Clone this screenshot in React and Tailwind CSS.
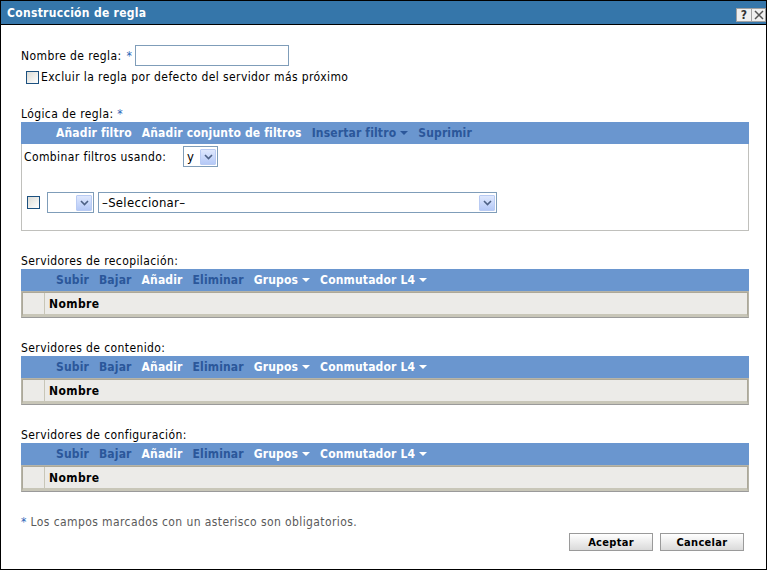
import React from 'react';

const font = { fontFamily: '"DejaVu Sans Condensed", "DejaVu Sans", sans-serif' };

// Small blue chevron button used on the fake selects
const SelectArrow = () => (
  <span className="w-[16px] h-[16px] mr-[1px] flex items-center justify-center bg-gradient-to-b from-[#dfe8fd] to-[#b5c9f7] border border-[#b9cbf3] rounded-[1px]">
    <svg width="9" height="6" viewBox="0 0 9 6">
      <path d="M1 1 L4.5 4.5 L8 1" stroke="#4d6185" strokeWidth="1.6" fill="none" />
    </svg>
  </span>
);

const Select = ({ value, className }) => (
  <div className={`h-[21px] border border-[#7f9db9] bg-white flex items-center justify-between ${className}`}>
    <span className="pl-[3px] text-[13px] text-black leading-none tracking-[0.3px]">{value}</span>
    <SelectArrow />
  </div>
);

const Checkbox = () => (
  <span className="inline-block w-[13px] h-[13px] border border-[#1c5180] bg-gradient-to-br from-[#dcdcd6] to-white" />
);

const Caret = ({ color }) => (
  <svg width="8" height="5" viewBox="0 0 8 5" className="ml-[4px] mt-[1px]">
    <path d="M0 0 H8 L4 4 Z" fill={color} />
  </svg>
);

// Toolbar item: white when active, dark blue when disabled
const Item = ({ label, active, menu }) => {
  const color = active ? '#ffffff' : '#2b579a';
  return (
    <span className="flex items-center font-bold text-[12px] tracking-[0.15px]" style={{ color }}>
      {label}
      {menu && <Caret color={color} />}
    </span>
  );
};

const Toolbar = ({ items }) => (
  <div className="h-[22px] w-[728px] bg-[#6a96cf] flex items-center pl-[35px] gap-[10px]">
    {items.map((it) => (
      <Item key={it.label} {...it} />
    ))}
  </div>
);

const ServerTable = ({ title }) => (
  <div className="mt-[22px]">
    <div className="text-[12px] text-black leading-[16px] tracking-[0.4px]">{title}</div>
    <Toolbar
      items={[
        { label: 'Subir' },
        { label: 'Bajar' },
        { label: 'Añadir', active: true },
        { label: 'Eliminar' },
        { label: 'Grupos', active: true, menu: true },
        { label: 'Conmutador L4', active: true, menu: true },
      ]}
    />
    <div className="w-[728px] border border-[#b6b4a8] border-b-[#9a9a9a]">
      <div className="h-[25px] bg-[#ecebe8] border border-[#aca899] border-b-[3px] border-b-[#c8c6b8] flex">
        <div className="w-[22px] border-r border-[#c8c6b8]" />
        <div className="pl-[4px] flex items-center font-bold text-[12px] text-black">Nombre</div>
      </div>
    </div>
  </div>
);

export default function App() {
  return (
    <div className="w-[770px] h-[571px] bg-white" style={font}>
      <div className="w-[767px] h-[570px] border border-black flex flex-col">
        {/* title bar */}
        <div className="h-[24px] bg-[#3576aa] border-b border-black flex items-center justify-between shrink-0">
          <span className="pl-[6px] text-white font-bold text-[12px] tracking-[0.3px]">Construcción de regla</span>
          <div className="flex self-start mt-[7px]">
            <span className="w-[16px] h-[14px] bg-[#efefef] border border-[#a0a0a0] flex items-center justify-center text-[12px] font-bold text-[#333] leading-none">?</span>
            <span className="w-[14px] h-[14px] bg-[#efefef] border border-[#a0a0a0] border-l-0 flex items-center justify-center">
              <svg width="10" height="10" viewBox="0 0 10 10">
                <path d="M1 1 L9 9 M9 1 L1 9" stroke="#555" strokeWidth="1.5" />
              </svg>
            </span>
          </div>
        </div>

        <div className="pl-[20px] pt-[20px] flex-1 flex flex-col tracking-[0.4px]">
          {/* rule name */}
          <div className="flex items-center h-[21px]">
            <span className="text-[12px] text-black">Nombre de regla:</span>
            <span className="text-[#2b63b6] text-[12px] ml-[5px]">*</span>
            <div className="ml-[3px] w-[154px] h-[21px] border border-[#7f9db9]" />
          </div>
          <div className="flex items-center mt-[4px] pl-[5px] h-[14px]">
            <Checkbox />
            <span className="ml-[2px] text-[12px] text-black">Excluir la regla por defecto del servidor más próximo</span>
          </div>

          {/* rule logic */}
          <div className="mt-[22px] text-[12px] text-black leading-[16px]">
            Lógica de regla: <span className="text-[#2b63b6]">*</span>
          </div>
          <Toolbar
            items={[
              { label: 'Añadir filtro', active: true },
              { label: 'Añadir conjunto de filtros', active: true },
              { label: 'Insertar filtro', menu: true },
              { label: 'Suprimir' },
            ]}
          />
          <div className="w-[728px] h-[87px] border border-t-0 border-[#c0c0bc] pl-[2px] pt-[2px]">
            <div className="flex items-center">
              <span className="text-[12px] text-black w-[159px]">Combinar filtros usando:</span>
              <Select value="y" className="w-[35px] h-[19px]" />
            </div>
            <div className="flex items-center mt-[25px] pl-[3px]">
              <Checkbox />
              <Select value="" className="ml-[7px] w-[47px]" />
              <Select value="–Seleccionar–" className="ml-[4px] w-[399px]" />
            </div>
          </div>

          <ServerTable title="Servidores de recopilación:" />
          <ServerTable title="Servidores de contenido:" />
          <ServerTable title="Servidores de configuración:" />

          {/* footer */}
          <div className="mt-[21px] text-[12px] text-[#5a5a5a]">
            <span className="text-[#2b63b6]">*</span> Los campos marcados con un asterisco son obligatorios.
          </div>
          <div className="flex justify-end gap-[7px] mt-[2px] pr-[22px]">
            {['Aceptar', 'Cancelar'].map((b) => (
              <button
                key={b}
                className="w-[84px] h-[18px] border border-[#9a9a9a] bg-gradient-to-b from-white to-[#dadada] text-[11px] font-bold text-black leading-none tracking-[0.3px]"
                style={font}
              >
                {b}
              </button>
            ))}
          </div>
        </div>
      </div>
    </div>
  );
}
